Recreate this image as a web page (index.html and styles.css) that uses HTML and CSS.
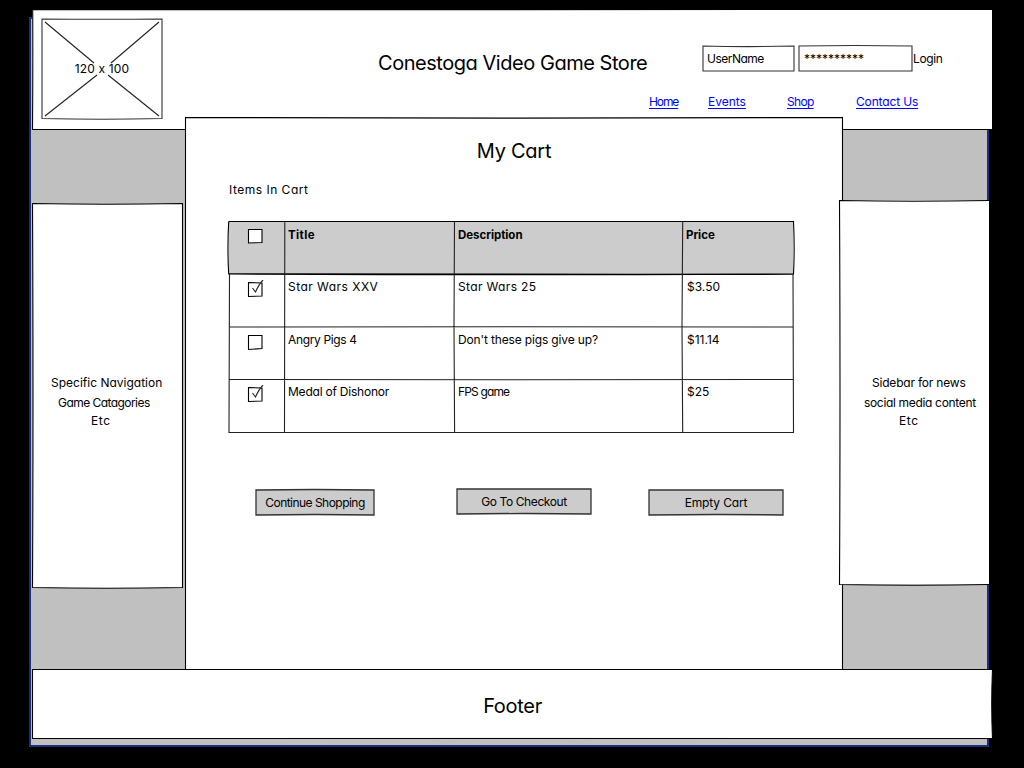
FILE: index.html
```html
<!DOCTYPE html>
<html lang="en">
<head>
<meta charset="utf-8">
<title>Conestoga Video Game Store - My Cart</title>
<link rel="stylesheet" href="styles.css">
</head>
<body>
<div class="page">
  <div class="frame"></div>

  <header class="panel header">
    <svg class="sketch" viewBox="0 0 960 121"><path class="fill" d="M0 1H960V120.500H0.500Z"/><path d="M0.700 0.500Q1 60 0.500 120.500Q480 119.500 960 120.500M0.500 0.700Q480 1 960 0.500"/></svg>
    <div class="logo">
      <svg class="sketch" viewBox="0 0 122 102"><path class="soft" d="M1 1Q60 1.500 121 1V100.500Q60 102 1 100.500Z"/><path class="thin" d="M4 4L53 45M118 4L70 45M4 98L56 57M118 98L67 57"/></svg>
      <span class="logo-size">120 x 100</span>
    </div>
    <h1 class="store">Conestoga Video Game Store</h1>
    <div class="tools">
      <div class="login">
        <div class="field user">
          <svg class="sketch" viewBox="0 0 93 27"><path class="soft" d="M1 1Q46 2.200 92 1V26H1Z"/></svg>
          <span>UserName</span>
        </div>
        <div class="field pass">
          <svg class="sketch" viewBox="0 0 115 27"><path class="soft" d="M1 1Q57 0 114 1V26H1Z"/></svg>
          <span class="stars">**********</span>
        </div>
        <span class="login-text">Login</span>
      </div>
      <nav class="nav">
        <span class="home"><a href="#">Home</a></span><span class="events"><a href="#">Events</a></span><span class="shop"><a href="#">Shop</a></span><span class="contact"><a href="#">Contact Us</a></span>
      </nav>
    </div>
  </header>

  <aside class="panel left">
    <svg class="sketch" viewBox="0 0 151 385"><path class="outline" d="M0.500 0.500Q75 2 150.500 0.500V384.500Q75 386 0.500 384.500Q1.500 190 0.500 0.500Z"/></svg>
    <p class="l1">Specific Navigation</p>
    <p class="l2">Game Catagories</p>
    <p class="l3">Etc</p>
  </aside>

  <main class="panel main">
    <svg class="sketch" viewBox="0 0 658 553"><path class="outline" d="M0.500 0.500Q329 1.800 657.500 0.500Q656.500 276 657.500 552.500H0.500Q1.500 276 0.500 0.500Z"/></svg>
    <h2 class="cart-title">My Cart</h2>
    <p class="cart-label">Items In Cart</p>
    <div class="table">
      <svg class="sketch" viewBox="0 0 566 212"><path class="head-fill" d="M0.500 0.500H565V53H0.500Z"/><path d="M0.700 0.500Q283 1.300 565.500 0.500Q566.800 27 565.500 53Q283 54.500 0.700 53Q-0.800 27 0.700 0.500M0.700 52.700L565.500 53.500"/><path class="thin" d="M1.500 53L1 211.500Q283 210.500 565.500 211.500L565 53M1 106Q283 105.400 565 106M1 158.500Q283 159 565 158.500M56.800 1L56.500 211M226.500 1L226 106L226.600 211M454.700 1L454 106L454.700 211"/></svg>
      <div class="cell check"><svg class="box" viewBox="0 0 17 18"><path class="box-line" d="M1.500 2.500L15 2.500V15.500L1.500 16Z"/></svg></div><div class="cell th title-head">Title</div><div class="cell th">Description</div><div class="cell th">Price</div>
      <div class="cell check"><svg class="box" viewBox="0 0 17 18"><path class="box-line" d="M1.500 2.500L15 3V16L1.500 16.500Z"/><path class="thin" d="M5.500 8L8.500 12Q12 4 16 0"/></svg></div><div class="cell xxv">Star Wars XXV</div><div class="cell wars">Star Wars 25</div><div class="cell price">$3.50</div>
      <div class="cell check"><svg class="box" viewBox="0 0 17 18"><path class="box-line" d="M1.500 2.500L15 2.500V15.500L1.500 16.500Z"/></svg></div><div class="cell angry">Angry Pigs 4</div><div class="cell pigs">Don't these pigs give up?</div><div class="cell price">$11.14</div>
      <div class="cell check"><svg class="box" viewBox="0 0 17 18"><path class="box-line" d="M1.500 2.500L15 3V16L1.500 16.500Z"/><path class="thin" d="M5.500 8L8.500 12Q12 4 16 0"/></svg></div><div class="cell medal">Medal of Dishonor</div><div class="cell fps">FPS game</div><div class="cell price">$25</div>
    </div>
    <div class="actions">
      <button class="btn continue"><svg class="sketch" viewBox="0 0 120 27"><path class="button-line" d="M1 1Q60 0 119 1V26Q60 25 1 26Z"/></svg><span>Continue Shopping</span></button>
      <button class="btn checkout"><svg class="sketch" viewBox="0 0 136 27"><path class="button-line" d="M1 1H135V26Q68 25 1 26Z"/></svg><span>Go To Checkout</span></button>
      <button class="btn empty"><svg class="sketch" viewBox="0 0 136 27"><path class="button-line" d="M1 1H135V26Q68 25 1 26Z"/></svg><span>Empty Cart</span></button>
    </div>
  </main>

  <aside class="panel right">
    <svg class="sketch" viewBox="0 0 150 385"><path class="fill" d="M0.500 0.500H150V384.500H0.500Z"/><path d="M150 0.500Q75 2 0.500 0.500Q1.500 190 0.500 384.500Q75 386 150 384.500"/></svg>
    <p class="l1">Sidebar for news</p>
    <p class="l2">social media content</p>
    <p class="l3">Etc</p>
  </aside>

  <footer class="panel footer">
    <svg class="sketch" viewBox="0 0 961 70"><path class="outline" d="M0.500 0.500Q480 1.500 960.500 0.500Q959 35 960.500 69.500Q480 68 0.500 69.500Z"/></svg>
    <span>Footer</span>
  </footer>
</div>
</body>
</html>
```
FILE: styles.css
```css
* { box-sizing: border-box; }
body {
  margin: 0;
  background: #000;
  color: #000;
  font: 12px/16px "Comic Sans MS", Inter, "Open Sans", sans-serif;
  font-feature-settings: "cv11" 1, "calt" 0;
}
h1, h2, p { margin: 0; font-weight: 400; }
.page {
  width: 1024px;
  height: 768px;
  overflow: hidden;
  display: grid;
  grid-template-columns: 32px 153px 654px 4px 146px 3px 32px;
  grid-template-rows: 9px 108px 13px 539px 70px 29px;
}
.frame {
  grid-area: 2 / 2 / 7 / 6;
  margin: 8px 0 21px -3px;
  background: #c0c0c0;
  border: 2px solid #1b2f7f;
}
.panel { position: relative; }
.sketch { position: absolute; inset: 0; width: 100%; height: 100%; overflow: visible; z-index: -1; }
svg path { fill: none; stroke: #000; stroke-width: 1.1; }
svg .fill { fill: #fff; stroke: none; }
svg .outline { fill: #fff; }
svg .soft { stroke: #333; }
svg .thin { stroke: #222; }
svg .head-fill { fill: #ccc; stroke: none; }
svg .button-line { fill: #ccc; stroke: #333; stroke-width: 1.3; }
svg .box-line { fill: #fff; }
.panel, .logo, .field, .table, .btn { isolation: isolate; position: relative; }

.header { grid-area: 2 / 2 / 4 / 7; display: flex; padding: 9px 0 0 9px; }
.logo { width: 122px; height: 102px; display: flex; align-items: center; justify-content: center; }
.logo-size { letter-spacing: .15px; }
.store { margin: 32px 0 0 215px; width: 271px; font-size: 20px; line-height: 26px; letter-spacing: -.46px; white-space: nowrap; }
.tools { padding: 27px 0 0; }
.login { display: flex; padding-left: 53px; }
.field { height: 27px; padding: 6px 5px; }
.user { width: 93px; letter-spacing: -.5px; }
.pass { width: 115px; margin-left: 3px; padding-left: 6px; }
.login-text { padding-top: 6px; letter-spacing: -.4px; }
.nav { display: flex; padding-top: 22px; }
.nav a { color: #00f; text-underline-offset: 2px; text-decoration-skip-ink: none; }
.home { width: 59px; letter-spacing: -1.1px; }
.events { width: 79px; }
.shop { width: 69px; letter-spacing: -.7px; }
.contact { letter-spacing: -.15px; }

.left { grid-area: 4 / 2 / 5 / 3; width: 151px; height: 385px; margin-top: 73px; padding-top: 172px; }
.right { grid-area: 4 / 4 / 5 / 6; height: 385px; margin-top: 70px; padding-top: 175px; }
.left p { padding-left: 19px; }
.left .l2 { padding: 4px 0 0 26px; letter-spacing: -.55px; }
.left .l3 { padding: 2px 0 0 59px; letter-spacing: .6px; }
.right p { padding-left: 33px; letter-spacing: -.2px; }
.right .l2 { padding: 4px 0 0 25px; letter-spacing: -.33px; }
.right .l3 { padding: 2px 0 0 60px; letter-spacing: .6px; }

.main { grid-area: 3 / 3 / 5 / 5; height: 553px; padding: 22px 0 0; }
.cart-title { font-size: 20px; line-height: 24px; letter-spacing: -.25px; text-align: center; }
.cart-label { margin: 19px 0 0 44px; letter-spacing: .5px; }
.table {
  margin: 23px 0 0 43px;
  width: 566px;
  height: 212px;
  display: grid;
  grid-template-columns: 57px 170px 228px 111px;
  grid-template-rows: 53px 53px 52px 54px;
}
.cell { padding: 5px 0 0 3px; white-space: nowrap; }
.th { font-weight: 700; padding-top: 6px; font-size: 11.5px; letter-spacing: -.05px; }
.title-head { letter-spacing: .4px; }
.xxv { letter-spacing: .47px; }
.wars { letter-spacing: .35px; }
.angry { letter-spacing: -.35px; }
.pigs { letter-spacing: -.15px; }
.medal { letter-spacing: -.22px; }
.fps { letter-spacing: -.85px; }
.check { padding: 6px 0 0 19px; }
.price { padding-left: 4px; }
.box { width: 17px; height: 18px; display: block; }
.actions { display: flex; margin: 56px 0 0 70px; }
.btn { border: 0; background: none; padding: 0; height: 27px; font: inherit; color: inherit; font-feature-settings: inherit; white-space: nowrap; }
.continue { width: 120px; letter-spacing: -.53px; }
.checkout { width: 136px; margin: -1px 0 0 81px; letter-spacing: -.4px; }
.empty { width: 136px; margin-left: 56px; letter-spacing: -.15px; }

.footer { grid-area: 5 / 2 / 6 / 8; width: 961px; display: flex; align-items: center; justify-content: center; padding-top: 3px; font-size: 20px; letter-spacing: -.3px; }
```
